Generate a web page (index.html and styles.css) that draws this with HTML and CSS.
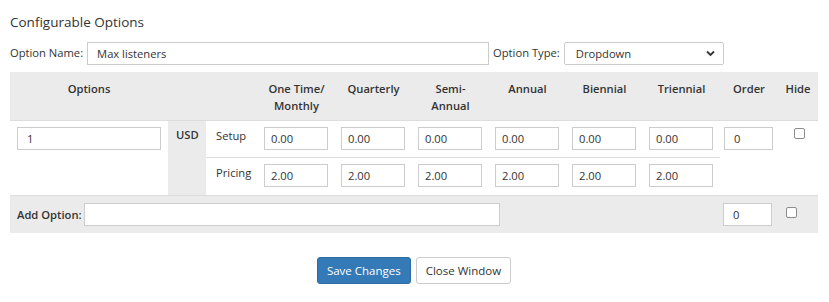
FILE: index.html
```html
<!DOCTYPE html>
<html>
<head>
<meta charset="utf-8">
<link rel="stylesheet" href="styles.css">
</head>
<body>
<div class="page">
  <h2 class="title">Configurable Options</h2>
  <div class="name-row">
    <label class="lbl">Option Name:</label>
    <input class="name-input" type="text" value="Max listeners">
    <label class="lbl type-lbl">Option Type:</label>
    <div class="select">
      <span>Dropdown</span>
      <svg class="chev" width="9" height="7" viewBox="0 0 9 7"><path d="M1 1.5 L4.5 5 L8 1.5" fill="none" stroke="#333" stroke-width="1.8"/></svg>
    </div>
  </div>
  <table class="opts">
    <colgroup>
      <col class="c-opt"><col class="c-cur"><col class="c-lbl">
      <col class="c-p"><col class="c-p"><col class="c-p"><col class="c-p"><col class="c-p"><col class="c-p">
      <col class="c-ord"><col class="c-hide">
    </colgroup>
    <thead>
      <tr>
        <th>Options</th>
        <th></th>
        <th></th>
        <th>One Time/<br>Monthly</th>
        <th>Quarterly</th>
        <th>Semi-<br>Annual</th>
        <th>Annual</th>
        <th>Biennial</th>
        <th>Triennial</th>
        <th>Order</th>
        <th>Hide</th>
      </tr>
    </thead>
    <tbody>
      <tr>
        <td rowspan="2" class="opt-cell"><input class="inp opt-inp" type="text" value="1"></td>
        <td rowspan="2" class="cur">USD</td>
        <td class="rl first">Setup</td>
        <td class="pc first"><input class="inp price" type="text" value="0.00"></td>
        <td class="pc first"><input class="inp price" type="text" value="0.00"></td>
        <td class="pc first"><input class="inp price" type="text" value="0.00"></td>
        <td class="pc first"><input class="inp price" type="text" value="0.00"></td>
        <td class="pc first"><input class="inp price" type="text" value="0.00"></td>
        <td class="pc first"><input class="inp price" type="text" value="0.00"></td>
        <td rowspan="2" class="ord-cell"><input class="inp ord" type="text" value="0"></td>
        <td rowspan="2" class="hide-cell"><span class="cb"></span></td>
      </tr>
      <tr>
        <td class="rl">Pricing</td>
        <td class="pc"><input class="inp price" type="text" value="2.00"></td>
        <td class="pc"><input class="inp price" type="text" value="2.00"></td>
        <td class="pc"><input class="inp price" type="text" value="2.00"></td>
        <td class="pc"><input class="inp price" type="text" value="2.00"></td>
        <td class="pc"><input class="inp price" type="text" value="2.00"></td>
        <td class="pc"><input class="inp price" type="text" value="2.00"></td>
      </tr>
    </tbody>
  </table>
  <div class="add-row">
    <label class="add-lbl">Add Option:</label>
    <input class="inp add-inp" type="text" value="">
    <div class="spacer"></div>
    <input class="inp ord" type="text" value="0">
    <span class="cb add-cb"></span>
  </div>
  <div class="actions">
    <button class="btn btn-primary">Save Changes</button>
    <button class="btn btn-default">Close Window</button>
  </div>
</div>
</body>
</html>
```

FILE: styles.css
```css
* { box-sizing: border-box; }
body {
  margin: 0;
  padding: 0 11px 0 10px;
  font-family: "Open Sans", "Liberation Sans", sans-serif;
  font-size: 11.2px;
  color: #333;
  background: #fff;
}
.page { width: 808px; }
.title {
  margin: 0;
  padding-top: 11px;
  font-size: 13.5px;
  font-weight: 400;
  line-height: 22px;
  height: 41px;
}
.name-row {
  display: flex;
  align-items: center;
  height: 24px;
}
.lbl { line-height: 18px; white-space: nowrap; }
.name-input {
  margin-left: 4px;
  width: 402px;
  height: 23px;
  border: 1px solid #ccc;
  padding: 0 9px;
  font: inherit;
  color: #333;
}
.type-lbl { margin-left: 4px; }
.select {
  margin-left: 4px;
  width: 160px;
  height: 23px;
  border: 1px solid #ccc;
  border-radius: 2px;
  display: flex;
  align-items: center;
  justify-content: space-between;
  padding: 0 8px 0 11px;
}
.chev { display: block; }
.opts {
  margin-top: 7px;
  width: 808px;
  border-collapse: collapse;
  table-layout: fixed;
}
.c-opt { width: 158px; }
.c-cur { width: 38px; }
.c-lbl { width: 52px; }
.c-p { width: 77px; }
.c-ord { width: 58px; }
.c-hide { width: 40px; }
.opts th {
  background: #ebebeb;
  font-weight: 600;
  text-align: center;
  vertical-align: top;
  padding: 8px 0 6px;
  line-height: 17px;
  height: 48px;
  border-bottom: 1px solid #ddd;
}
.opts td {
  vertical-align: top;
  padding: 6px 0 0 7px;
}
.opts tbody tr { height: 37px; }
.opt-cell { padding-left: 7px; }
.cur {
  background: #ebebeb;
  font-weight: 600;
  padding: 5px 0 0 8px !important;
  line-height: 18px;
}
.rl { padding: 6px 0 0 10px !important; line-height: 18px; }
.first { border-bottom: 1px solid #ddd; }
.opts td.pc { padding-left: 6px; }
.ord-cell { padding-left: 4px !important; }
.hide-cell { padding: 7px 0 0 16px !important; }
.inp {
  height: 23px;
  border: 1px solid #ccc;
  font: inherit;
  color: #333;
  padding: 0 6px;
  display: block;
}
.opt-inp { width: 144px; padding-left: 9px; }
.price { width: 64px; }
.ord { width: 49px; padding-left: 9px; }
.cb {
  display: block;
  width: 11px;
  height: 11px;
  border: 1px solid #8c8c8c;
  border-radius: 2px;
  background: #fff;
}
.add-row {
  background: #ebebeb;
  border-top: 1px solid #ddd;
  height: 38px;
  display: flex;
  align-items: flex-start;
  padding-top: 7px;
}
.add-lbl {
  font-weight: 600;
  line-height: 23px;
  padding-left: 7px;
  width: 74px;
  white-space: nowrap;
}
.add-inp { width: 416px; }
.spacer { flex: 1; }
.add-row .ord { margin-right: 14px; }
.add-cb { margin-top: 4px; margin-right: 21px; }
.actions {
  text-align: center;
  padding-top: 24px;
}
.btn {
  font: inherit;
  font-size: 11.5px;
  line-height: 17px;
  padding: 4px 9px;
  border: 1px solid #ccc;
  border-radius: 3px;
  margin: 0 1px;
}
.btn-primary {
  background: #337ab7;
  border-color: #2e6da4;
  color: #fff;
}
.btn-default {
  background: #fff;
  color: #333;
}
```
